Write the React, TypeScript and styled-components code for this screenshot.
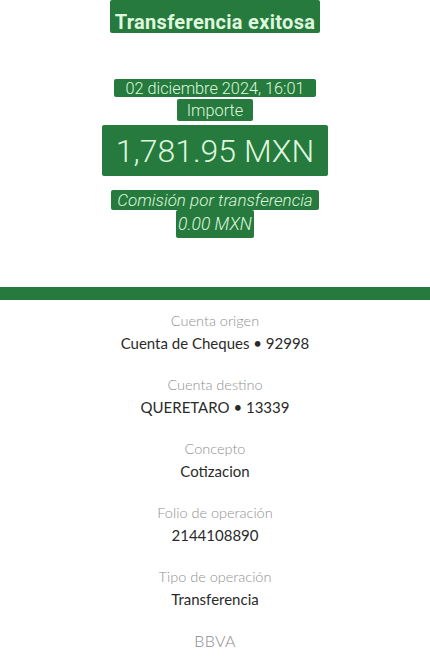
import React from "react";
import styled, { createGlobalStyle } from "styled-components";

const Global = createGlobalStyle`
  html, body { margin: 0; padding: 0; background: #ffffff; }
  body { font-family: Roboto, "Noto Sans", sans-serif; -webkit-font-smoothing: antialiased; }
`;

const GREEN = "#267a3d";
const PALE = "#def7dd";

const Page = styled.div`
  width: 430px;
  min-height: 661px;
  background: #fff;
  overflow: hidden;
`;

const Header = styled.header`
  display: flex;
  flex-direction: column;
  align-items: center;
`;

const Chip = styled.span<{ $size: number; $weight?: number; $italic?: boolean; $h: number; $px: number; $mt?: number }>`
  display: inline-flex;
  align-items: center;
  justify-content: center;
  box-sizing: border-box;
  height: ${(p) => p.$h}px;
  padding: 0 ${(p) => p.$px}px;
  margin-top: ${(p) => p.$mt ?? 0}px;
  background: ${GREEN};
  color: ${PALE};
  font-size: ${(p) => p.$size}px;
  font-weight: ${(p) => p.$weight ?? 300};
  font-style: ${(p) => (p.$italic ? "italic" : "normal")};
  white-space: nowrap;
  border-radius: 2px;
`;

const TitleChip = styled(Chip)`
  padding-top: 10px;
  letter-spacing: 0.3px;
`;

const Bar = styled.div`
  height: 13px;
  background: ${GREEN};
  margin-top: 49px;
`;

const Details = styled.section`
  display: flex;
  flex-direction: column;
  align-items: center;
  padding-top: 12px;
  gap: 24px;
  font-family: Lato, "Noto Sans", sans-serif;
`;

const Item = styled.div`
  display: flex;
  flex-direction: column;
  align-items: center;
  gap: 4px;
`;

const Label = styled.div`
  font-size: 14.5px;
  line-height: 18px;
  color: #909090;
  font-weight: 300;
`;

const Value = styled.div`
  font-size: 15px;
  line-height: 18px;
  color: #2a2a2a;
  font-weight: 400;
`;

const Brand = styled.div`
  font-size: 16px;
  line-height: 18px;
  color: #8a8a8a;
  font-weight: 300;
  letter-spacing: 0.3px;
`;

const details: [string, string][] = [
  ["Cuenta origen", "Cuenta de Cheques • 92998"],
  ["Cuenta destino", "QUERETARO • 13339"],
  ["Concepto", "Cotizacion"],
  ["Folio de operación", "2144108890"],
  ["Tipo de operación", "Transferencia"],
];

export default function App() {
  return (
    <Page>
      <Global />
      <Header>
        <TitleChip $size={20} $weight={700} $h={33} $px={5}>
          Transferencia exitosa
        </TitleChip>
        <Chip $size={16.3} $h={18} $px={11} $mt={46}>
          02 diciembre 2024, 16:01
        </Chip>
        <Chip $size={16.3} $h={22} $px={10} $mt={2}>
          Importe
        </Chip>
        <Chip $size={32} $h={51} $px={14} $mt={4}>
          1,781.95 MXN
        </Chip>
        <Chip $size={17} $italic $h={20} $px={6} $mt={14}>
          Comisión por transferencia
        </Chip>
        <Chip $size={17.5} $italic $h={28} $px={2}>
          0.00 MXN
        </Chip>
      </Header>
      <Bar />
      <Details>
        {details.map(([l, v]) => (
          <Item key={l}>
            <Label>{l}</Label>
            <Value>{v}</Value>
          </Item>
        ))}
        <Brand>BBVA</Brand>
      </Details>
    </Page>
  );
}
